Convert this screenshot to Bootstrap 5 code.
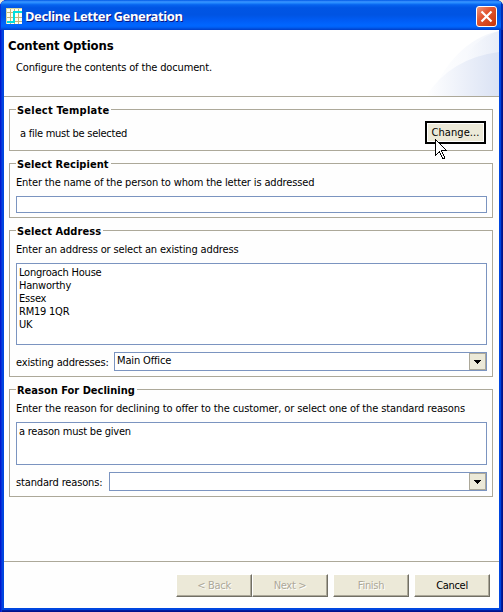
<!DOCTYPE html>
<html lang="en">
<head>
<meta charset="utf-8">
<title>Decline Letter Generation</title>
<link href="https://cdn.jsdelivr.net/npm/bootstrap@5.3.0/dist/css/bootstrap.min.css" rel="stylesheet">
<style>
body{width:503px;height:612px;overflow:hidden;background:#ece9d8;color:#000;font:11px/13px "DejaVu Sans Condensed","DejaVu Sans",sans-serif;font-stretch:condensed;letter-spacing:-.15px;white-space:nowrap}
.window{height:612px;padding:0 4px 4px;border-radius:7px 7px 0 0;background:#0046e0;box-shadow:inset 1px 0 #0019cf,inset 2px 0 #0831d9,inset -1px 0 #00138c,inset -2px 0 #001ea0,inset 0 -1px #00138c,inset 0 -2px #001ea0;overflow:hidden}
.titlebar{height:30px;margin:0 -4px;padding:2px 6px 0 6px;background:linear-gradient(#0058e6 0,#3a93ff 6%,#288eff 9%,#0663ef 16%,#0055e4 26%,#0054e3 50%,#005cf5 68%,#0066ff 84%,#0062f8 90%,#0049d6 97%,#003dc7 100%);box-shadow:inset 1px 0 #0831d9,inset -2px 0 #0030b8}
.caption{font:bold 13px/18px "Noto Sans","Open Sans",sans-serif;letter-spacing:-.4px;color:#fff;text-shadow:1px 1px #0a1883;margin-left:3px}
.client{height:578px;background:#fefefe}
.banner{height:67px;border-bottom:1px solid #aca899;background:#fff}
.banner-art{right:0;top:0}
.page-title{font-size:13px;line-height:16px;font-weight:bold;letter-spacing:-.15px}
.intro{padding-top:7px}
.groups{padding:12px 6px 0 5px;gap:12px;height:464px}
.group{border:1px solid #aca899;padding:0 5px 0 6px}
.group-title{align-self:flex-start;font-size:11px;line-height:13px;font-weight:bold;letter-spacing:.07px;background:#fefefe;margin:-6px 0 0;padding:0 2px 0 1px}
.g1{height:42px}.g2{height:55px}.g3{height:147px}.g4{height:108px}
.g1 .group-title{letter-spacing:.23px}
.g4 .group-title{letter-spacing:0}
.g4 .hint{letter-spacing:-.12px}
.status{padding-top:6px;letter-spacing:-.25px}
.hint{margin-top:5px}
.field{border:1px solid #7b94c0;border-radius:0;background:#fff;color:#000;font:inherit;letter-spacing:-.22px;resize:none;padding:2px;min-height:0}
.field:focus{box-shadow:none}
.one-line{height:17px;margin-top:7px}
.address{height:82px;margin-top:7px}
.reason{height:43px;margin-top:7px}
.combo-row{height:19px;margin-top:7px}
.combo{height:19px;border:1px solid #7b94c0;background:#fff}
.combo-addresses{width:373px}
.combo-reasons{width:378px}
.combo-value{padding:1px 2px}
.drop{width:17px;background:#ece9d8;border:1px solid #aca899}
.btn.x-btn{width:76px;height:23px;padding:0 0 1px;border:1px solid;border-color:#fff #716f64 #716f64 #fff;border-radius:0;background:#ece9d8;box-shadow:inset -1px -1px #aca899;color:#000;font:inherit;letter-spacing:-.3px;opacity:1}
.btn.x-btn:disabled{color:#aca899;text-shadow:1px 1px #fff}
.btn.change{width:61px;height:23px;margin-right:1px;border:2px solid #000;box-shadow:inset 0 0 0 1px #fff;letter-spacing:.1px}
.pointer{left:10px;top:18px}
.actions{height:47px;border-top:1px solid #aca899;padding:12px 9px 0;gap:5px}
</style>
<script src="https://cdn.jsdelivr.net/npm/bootstrap@5.3.0/dist/js/bootstrap.bundle.min.js"></script>
</head>
<body>
<div class="window">
  <header class="titlebar d-flex align-items-center">
    <svg width="16" height="16" shape-rendering="crispEdges"><path fill="#fffff0" d="M0 0h16v16H0z"/><path d="M0 4.5h16M0 9.5h16M0 13.5h16M4.5 0v16M8.5 0v16M12.5 0v16" stroke="#c0b67c"/><path d="M0 14h8V4h8" fill="none" stroke="#00dede" stroke-width="2"/><path d="M0 .5h16M.5 0v16" stroke="#d8d7a0"/></svg>
    <div class="caption">Decline Letter Generation</div>
    <svg class="ms-auto" width="21" height="21"><defs><linearGradient id="cl" x2="1" y2="1"><stop stop-color="#f09a80"/><stop offset=".4" stop-color="#e25631"/><stop offset="1" stop-color="#c83407"/></linearGradient></defs><rect x=".5" y=".5" width="20" height="20" rx="2.5" fill="url(#cl)" stroke="#fff"/><path d="M5.5 5.5l10 10M15.5 5.5l-10 10" stroke="#fff" stroke-width="2.2"/></svg>
  </header>
  <main class="client">
    <div class="banner position-relative">
      <svg class="banner-art position-absolute" width="76" height="66"><defs><linearGradient id="a"><stop stop-color="#fff"/><stop offset="1" stop-color="#e4eaf7"/></linearGradient><linearGradient id="b"><stop stop-color="#fff"/><stop offset="1" stop-color="#dae2f4"/></linearGradient></defs><path d="M8 66C20 36 44 7 76 1V66z" fill="url(#a)" opacity=".5"/><path d="M32 45Q48 9 76 1V45z" fill="url(#a)" opacity=".7"/><path d="M3 66Q28 28 76 22V66z" fill="url(#b)"/></svg>
      <div class="position-relative ps-1 pt-2">
        <h1 class="page-title mb-0">Content Options</h1>
        <p class="intro mb-0 ms-2">Configure the contents of the document.</p>
      </div>
    </div>
    <div class="groups d-flex flex-column">
      <section class="group g1 d-flex flex-column">
        <h2 class="group-title">Select Template</h2>
        <div class="d-flex justify-content-between pt-1">
          <span class="status ps-1">a file must be selected</span>
          <div class="position-relative">
            <button class="btn x-btn change d-block">Change...</button>
            <svg class="pointer position-absolute" width="13" height="21" shape-rendering="crispEdges"><path d="M.5 .5v16l4-4 3 7h2v-1l-3-7h5z" fill="#fff" stroke="#000"/></svg>
          </div>
        </div>
      </section>
      <section class="group g2 d-flex flex-column">
        <h2 class="group-title">Select Recipient</h2>
        <label class="hint" for="name">Enter the name of the person to whom the letter is addressed</label>
        <input id="name" class="form-control field one-line">
      </section>
      <section class="group g3 d-flex flex-column">
        <h2 class="group-title">Select Address</h2>
        <label class="hint" for="addr">Enter an address or select an existing address</label>
        <textarea id="addr" class="form-control field address">Longroach House
Hanworthy
Essex
RM19 1QR
UK</textarea>
        <div class="combo-row d-flex">
          <span class="pt-1">existing addresses:</span>
          <div class="combo combo-addresses d-flex ms-auto"><span class="combo-value flex-grow-1">Main Office</span><span class="drop d-flex align-items-center justify-content-center"><svg width="7" height="4" shape-rendering="crispEdges"><path d="M0 0h7v1H6v1H5v1H4v1H3V3H2V2H1V1H0z"/></svg></span></div>
        </div>
      </section>
      <section class="group g4 d-flex flex-column">
        <h2 class="group-title">Reason For Declining</h2>
        <label class="hint" for="why">Enter the reason for declining to offer to the customer, or select one of the standard reasons</label>
        <textarea id="why" class="form-control field reason">a reason must be given</textarea>
        <div class="combo-row d-flex">
          <span class="pt-1">standard reasons:</span>
          <div class="combo combo-reasons d-flex ms-auto"><span class="combo-value flex-grow-1"></span><span class="drop d-flex align-items-center justify-content-center"><svg width="7" height="4" shape-rendering="crispEdges"><path d="M0 0h7v1H6v1H5v1H4v1H3V3H2V2H1V1H0z"/></svg></span></div>
        </div>
      </section>
    </div>
    <footer class="actions d-flex justify-content-end">
      <div class="d-flex"><button class="btn x-btn" disabled>&lt; Back</button><button class="btn x-btn" disabled>Next &gt;</button></div>
      <button class="btn x-btn" disabled>Finish</button>
      <button class="btn x-btn">Cancel</button>
    </footer>
  </main>
</div>
</body>
</html>
